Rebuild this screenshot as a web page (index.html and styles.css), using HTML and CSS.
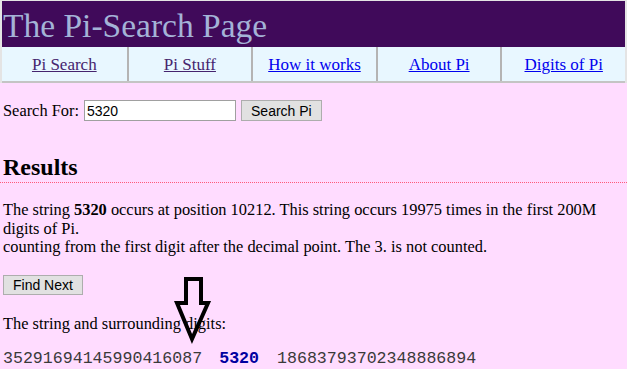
FILE: index.html
```html
<!DOCTYPE html>
<html lang="en">

<head>
    <meta charset="UTF-8">
    <title>The Pi-Search Page</title>
    <link rel="stylesheet" href="styles.css">
</head>

<body>
    <div class="top">
        <div class="masthead">The Pi-Search Page</div>
        <div class="nav">
            <div class="nav-cell"><a href="#" class="visited">Pi Search</a></div>
            <div class="nav-cell"><a href="#" class="visited">Pi Stuff</a></div>
            <div class="nav-cell"><a href="#">How it works</a></div>
            <div class="nav-cell"><a href="#">About Pi</a></div>
            <div class="nav-cell"><a href="#">Digits of Pi</a></div>
        </div>
    </div>

    <div class="content">
        <form class="search-form">
            <label for="search">Search For:</label>
            <input id="search" type="text" value="5320">
            <button type="button" class="btn">Search Pi</button>
        </form>

        <h2 class="results-title">Results</h2>

        <p class="result-text">The string <b>5320</b> occurs at position 10212. This string occurs 19975 times in the first 200M digits of Pi.<br>counting from the first digit after the decimal point. The 3. is not counted.</p>

        <button type="button" class="btn find-btn">Find Next</button>

        <p class="surround-label">The string and surrounding digits:</p>

        <div class="digits">
            <span>35291694145990416087</span><span class="match">5320</span><span>18683793702348886894</span>
        </div>

        <svg class="arrow" width="40" height="70" viewBox="0 0 40 70">
            <polygon points="13,4 28,4 28,28 35,28 19,64 4,28 13,28" fill="none" stroke="#000" stroke-width="4"/>
        </svg>
    </div>
</body>

</html>
```

FILE: styles.css
```css
body {
    margin: 0;
    background-color: #ffdcff;
    font-family: "Liberation Serif", "Times New Roman", serif;
    font-size: 16.4px;
    color: #000;
}

.top {
    border: 1px solid #e4e4e4;
    border-width: 1px 2px 0 2px;
    background-color: #fff;
}

.masthead {
    background-color: #400a5a;
    color: #a4b3d7;
    font-size: 33.5px;
    line-height: 43px;
    padding: 3px 0 0 1px;
}

.nav {
    display: grid;
    grid-template-columns: repeat(5, 1fr);
    background-color: #e8f7ff;
    border-bottom: 2px solid #c4c4c4;
}

.nav-cell {
    height: 34px;
    display: flex;
    align-items: center;
    justify-content: center;
    border-left: 2px solid #b4b4b4;
    font-size: 17px;
    padding-top: 2px;
    box-sizing: border-box;
}

.nav-cell:first-child {
    border-left: none;
}

.nav a {
    color: #0000ee;
}

.nav a.visited {
    color: #45246e;
}

.content {
    position: relative;
    padding: 17px 3px 0;
}

.search-form {
    display: flex;
    align-items: center;
    margin: 0;
}

.search-form label {
    margin-right: 5px;
}

.search-form input {
    width: 146px;
    height: 17px;
    padding: 1px 2px;
    border: 1px solid #a0a0a0;
    font-family: "Liberation Sans", Arial, sans-serif;
    font-size: 14px;
    margin: 0 5px 0 0;
}

.btn {
    font-family: "Liberation Sans", Arial, sans-serif;
    font-size: 14px;
    background-color: #e1e1e1;
    border: 1px solid #adadad;
    padding: 0 9px;
    height: 21px;
    color: #000;
}

.results-title {
    font-size: 24px;
    margin: 32px -3px 0 -3px;
    padding: 0 3px 1px;
    border-bottom: 1px dotted #ff5a7a;
    line-height: 28px;
}

.result-text {
    margin: 18px 0 0;
    line-height: 18.5px;
}

.find-btn {
    margin-top: 18px;
    height: 20px;
    padding: 0 9px;
}

.surround-label {
    margin: 19px 0 0;
}

.digits {
    margin-top: 15px;
    font-family: "Liberation Mono", "Courier New", monospace;
    font-size: 16.6px;
    color: #3a3a3a;
}

.digits .match {
    color: #0000a0;
    font-weight: bold;
    margin: 0 18px 0 17px;
}

.arrow {
    position: absolute;
    left: 173px;
    top: 192px;
}
```
